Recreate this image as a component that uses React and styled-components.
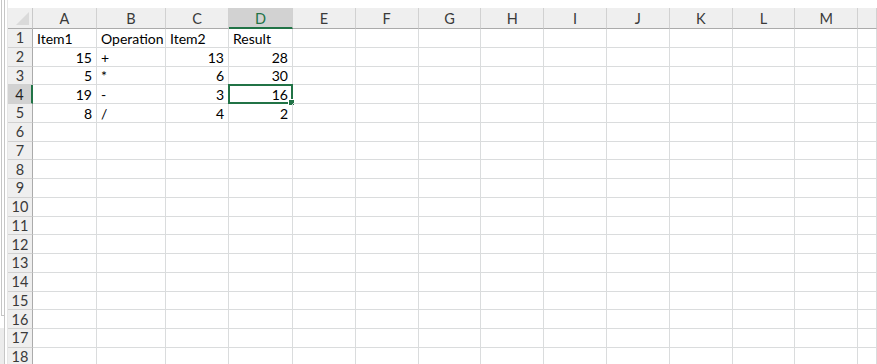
import React from 'react';
import styled, { createGlobalStyle } from 'styled-components';

const GlobalStyle = createGlobalStyle`
  html, body {
    margin: 0;
    padding: 0;
    background: #ffffff;
  }
  body {
    font-family: "Lato", "Liberation Sans", sans-serif;
    overflow: hidden;
  }
`;

const GRID = '#dadcdd';
const GREEN = '#217346';

const Page = styled.div`
  display: flex;
  width: 877px;
  height: 364px;
  overflow: hidden;
  background: #fff;
`;

const Frame = styled.div`
  width: 8px;
  flex: none;
  display: flex;
  border-right: 1px solid #e6e6e6;
  box-sizing: border-box;
`;

const FrameTrack = styled.div`
  width: 5px;
  display: flex;
  flex-direction: column;
  border-right: 1px solid #c6c6c6;
  box-sizing: border-box;
`;

const FrameThumb = styled.div`
  height: 316px;
  margin-left: 1px;
  border-left: 1px solid #c6c6c6;
  border-bottom: 1px solid #c6c6c6;
  box-sizing: border-box;
`;

const FrameFoot = styled.div`
  flex: 1;
  margin-top: 12px;
  background: #ececec;
`;

const Sheet = styled.div`
  flex: 1;
  display: grid;
  grid-template-columns: 25px 64px 69px 63px 64px repeat(9, 62.8px) 1fr;
  grid-template-rows: 8px 21px;
  grid-auto-rows: 18.75px;
  align-content: start;
`;

const TopGap = styled.div`
  grid-column: 1 / -1;
  background: #fff;
`;

const Corner = styled.div`
  position: relative;
  background: #efefef;
  border-right: 1px solid #c9c9c9;
  border-bottom: 1px solid #ababab;
  box-sizing: border-box;

  &::after {
    content: '';
    position: absolute;
    right: 3px;
    bottom: 3px;
    width: 0;
    height: 0;
    border-left: 13px solid transparent;
    border-bottom: 13px solid #dadada;
  }
`;

const ColHead = styled.div`
  display: flex;
  align-items: center;
  justify-content: center;
  box-sizing: border-box;
  font-size: 14.5px;
  color: ${p => (p.$active ? GREEN : '#3a3a3a')};
  background: ${p => (p.$active ? '#d2d2d2' : '#efefef')};
  border-right: 1px solid #d1d1d1;
  border-bottom: ${p => (p.$active ? `2px solid ${GREEN}` : '1px solid #ababab')};
  padding-top: ${p => (p.$active ? '1px' : '0')};
`;

const RowHead = styled.div`
  display: flex;
  align-items: center;
  justify-content: center;
  box-sizing: border-box;
  font-size: 14.5px;
  color: ${p => (p.$active ? '#222' : '#3a3a3a')};
  background: ${p => (p.$active ? '#d2d2d2' : '#efefef')};
  border-right: ${p => (p.$active ? `2px solid ${GREEN}` : '1px solid #ababab')};
  border-bottom: 1px solid #d1d1d1;
`;

const Cell = styled.div`
  position: relative;
  display: flex;
  align-items: center;
  justify-content: ${p => (p.$num ? 'flex-end' : 'flex-start')};
  box-sizing: border-box;
  padding: 1px 4px 0 4px;
  font-size: 14px;
  color: #000;
  white-space: nowrap;
  border-right: 1px solid ${GRID};
  border-bottom: 1px solid ${GRID};
`;

const Selection = styled.div`
  position: absolute;
  left: -1px;
  top: -1px;
  right: -1px;
  bottom: -1px;
  border: 2px solid ${GREEN};
  pointer-events: none;
`;

const FillHandle = styled.div`
  position: absolute;
  right: -4px;
  bottom: -4px;
  width: 5px;
  height: 5px;
  background: ${GREEN};
  border: 1px solid #fff;
`;

const columns = ['A', 'B', 'C', 'D', 'E', 'F', 'G', 'H', 'I', 'J', 'K', 'L', 'M', ''];

const data = [
  ['Item1', 'Operation', 'Item2', 'Result'],
  [15, '+', 13, 28],
  [5, '*', 6, 30],
  [19, '-', 3, 16],
  [8, '/', 4, 2],
];

const ROWS = 18;
const active = { row: 4, col: 3 };

function App() {
  const rows = [];
  for (let r = 1; r <= ROWS; r++) {
    const values = data[r - 1] || [];
    rows.push(
      <RowHead key={`h${r}`} $active={r === active.row}>
        {r}
      </RowHead>
    );
    columns.forEach((c, ci) => {
      const v = values[ci];
      const isActive = r === active.row && ci === active.col;
      rows.push(
        <Cell key={`${r}-${ci}`} $num={typeof v === 'number'}>
          {v}
          {isActive && (
            <Selection>
              <FillHandle />
            </Selection>
          )}
        </Cell>
      );
    });
  }

  return (
    <>
      <GlobalStyle />
      <Page>
        <Frame>
          <FrameTrack>
            <FrameThumb />
            <FrameFoot />
          </FrameTrack>
        </Frame>
        <Sheet>
          <TopGap />
          <Corner />
          {columns.map((c, i) => (
            <ColHead key={c || 'end'} $active={i === active.col}>
              {c}
            </ColHead>
          ))}
          {rows}
        </Sheet>
      </Page>
    </>
  );
}

export default App;
